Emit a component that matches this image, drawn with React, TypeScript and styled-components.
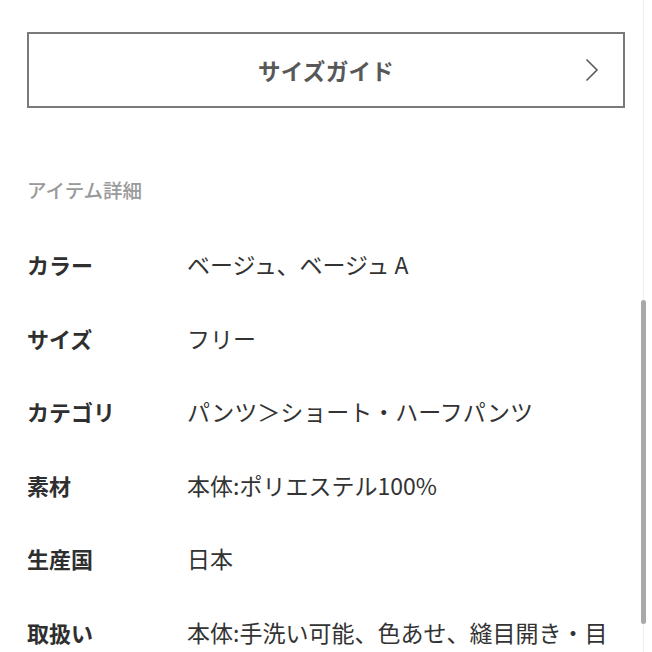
import React from "react";
import styled, { createGlobalStyle } from "styled-components";

const GlobalStyle = createGlobalStyle`
  html, body {
    margin: 0;
    padding: 0;
    background: #ffffff;
    overflow: hidden;
  }
  body {
    font-family: "Noto Sans CJK JP", "Noto Sans", sans-serif;
    color: #333333;
  }
`;

const Page = styled.div`
  position: relative;
  width: 652px;
  height: 652px;
  overflow: hidden;
  box-sizing: border-box;
  padding: 32px 27px 0 27px;
  display: flex;
  flex-direction: column;

  & > * {
    flex-shrink: 0;
  }
`;

const GuideButton = styled.button`
  display: grid;
  grid-template-columns: 1fr auto 1fr;
  align-items: center;
  width: 598px;
  height: 76px;
  box-sizing: border-box;
  border: 2px solid #7a7a7a;
  background: #ffffff;
  padding: 0 24px 0 0;
  margin: 0;
  font-family: "Noto Sans CJK JP", sans-serif;
  font-size: 22.5px;
  font-weight: 700;
  color: #585858;
  letter-spacing: 0.3px;
  cursor: pointer;
`;

const ButtonLabel = styled.span`
  grid-column: 2;
  padding-left: 24px;
`;

const ChevronWrap = styled.span`
  grid-column: 3;
  justify-self: end;
  display: flex;
`;

const SectionTitle = styled.h2`
  margin: 68px 0 0 0;
  font-size: 19.5px;
  line-height: 28px;
  font-weight: 500;
  color: #9a9a9a;
`;

const DetailList = styled.dl`
  margin: 23px 0 0 0;
  padding: 0;
  display: flex;
  flex-direction: column;

  & > * {
    flex-shrink: 0;
  }
`;

const Row = styled.div`
  display: grid;
  grid-template-columns: 160px 1fr;
  align-items: start;
  padding: 21px 0 20.5px 0;
  line-height: 32px;
`;

const Label = styled.dt`
  margin: 0;
  font-size: 22px;
  font-weight: 700;
  color: #2f2f2f;
`;

const Value = styled.dd`
  margin: 0;
  font-size: 23px;
  font-weight: 400;
  color: #333333;
  word-break: break-all;
`;

const ScrollBar = styled.div`
  position: absolute;
  top: 0;
  bottom: 0;
  right: 6px;
  width: 5px;
  display: flex;
  flex-direction: column;
  align-items: center;
  padding-top: 300px;
  box-sizing: border-box;
  background: linear-gradient(#efefef, #efefef) center / 1px 100% no-repeat;
`;

const ScrollThumb = styled.div`
  width: 5px;
  height: 324px;
  border-radius: 3px;
  background: #a9a9a9;
`;

const Chevron = () => (
  <svg width="14" height="24" viewBox="0 0 14 24" fill="none">
    <path d="M1.5 1.5 L12 12 L1.5 22.5" stroke="#5a5a5a" strokeWidth="1.6" />
  </svg>
);

const details: { label: string; value: string }[] = [
  { label: "カラー", value: "ベージュ、ベージュ A" },
  { label: "サイズ", value: "フリー" },
  { label: "カテゴリ", value: "パンツ＞ショート・ハーフパンツ" },
  { label: "素材", value: "本体:ポリエステル100%" },
  { label: "生産国", value: "日本" },
  { label: "取扱い", value: "本体:手洗い可能、色あせ、縫目開き・目寄れの可能性があります" },
];

export default function App() {
  return (
    <>
      <GlobalStyle />
      <Page>
        <GuideButton>
          <ButtonLabel>サイズガイド</ButtonLabel>
          <ChevronWrap>
            <Chevron />
          </ChevronWrap>
        </GuideButton>
        <SectionTitle>アイテム詳細</SectionTitle>
        <DetailList>
          {details.map((d) => (
            <Row key={d.label}>
              <Label>{d.label}</Label>
              <Value>{d.value}</Value>
            </Row>
          ))}
        </DetailList>
        <ScrollBar>
          <ScrollThumb />
        </ScrollBar>
      </Page>
    </>
  );
}
